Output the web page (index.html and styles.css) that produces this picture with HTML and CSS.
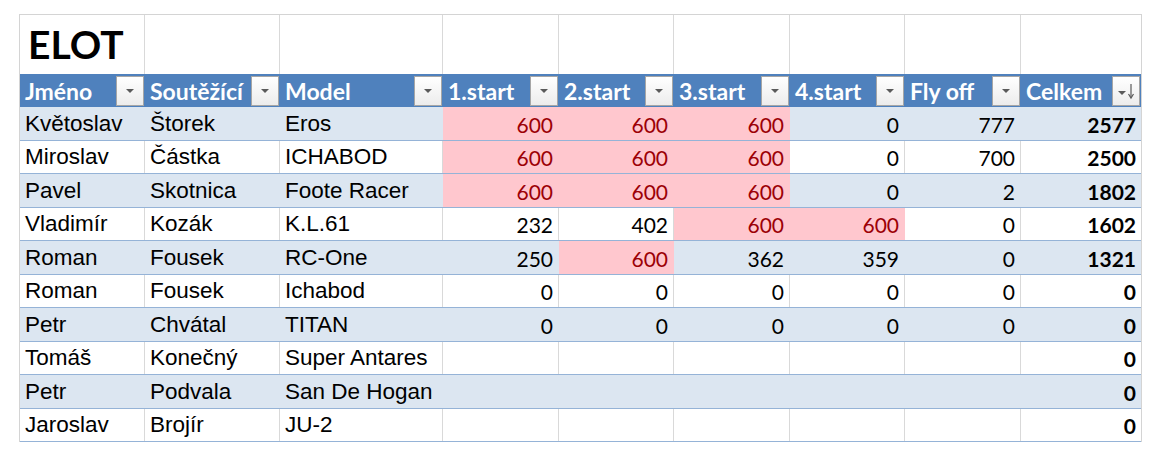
FILE: index.html
```html
<!DOCTYPE html>
<html lang="cs">
<head>
<meta charset="utf-8">
<title>ELOT</title>
<link rel="stylesheet" href="styles.css">
</head>
<body>
<div class="sheet">
  <div class="row title-row">
    <div class="cell title">ELOT</div>
    <div class="cell"></div><div class="cell"></div><div class="cell"></div><div class="cell"></div>
    <div class="cell"></div><div class="cell"></div><div class="cell"></div><div class="cell"></div>
  </div>
  <div class="row head">
    <div class="hcell"><span>Jméno</span><span class="fbtn"><svg width="10" height="6" viewBox="0 0 10 6"><path d="M1 1h8L5 5z" fill="#5a5a5a"/></svg></span></div>
    <div class="hcell"><span>Soutěžící</span><span class="fbtn"><svg width="10" height="6" viewBox="0 0 10 6"><path d="M1 1h8L5 5z" fill="#5a5a5a"/></svg></span></div>
    <div class="hcell"><span>Model</span><span class="fbtn"><svg width="10" height="6" viewBox="0 0 10 6"><path d="M1 1h8L5 5z" fill="#5a5a5a"/></svg></span></div>
    <div class="hcell"><span>1.start</span><span class="fbtn"><svg width="10" height="6" viewBox="0 0 10 6"><path d="M1 1h8L5 5z" fill="#5a5a5a"/></svg></span></div>
    <div class="hcell"><span>2.start</span><span class="fbtn"><svg width="10" height="6" viewBox="0 0 10 6"><path d="M1 1h8L5 5z" fill="#5a5a5a"/></svg></span></div>
    <div class="hcell"><span>3.start</span><span class="fbtn"><svg width="10" height="6" viewBox="0 0 10 6"><path d="M1 1h8L5 5z" fill="#5a5a5a"/></svg></span></div>
    <div class="hcell"><span>4.start</span><span class="fbtn"><svg width="10" height="6" viewBox="0 0 10 6"><path d="M1 1h8L5 5z" fill="#5a5a5a"/></svg></span></div>
    <div class="hcell"><span>Fly off</span><span class="fbtn"><svg width="10" height="6" viewBox="0 0 10 6"><path d="M1 1h8L5 5z" fill="#5a5a5a"/></svg></span></div>
    <div class="hcell"><span>Celkem</span><span class="fbtn"><svg width="22" height="20" viewBox="0 0 22 20"><path d="M3 10h8l-4 4z" fill="#5a5a5a"/><path d="M16 3v13" stroke="#5a5a5a" stroke-width="1.2"/><path d="M13.5 13l2.5 4 2.5-4" fill="none" stroke="#5a5a5a" stroke-width="1.2"/></svg></span></div>
  </div>

  <div class="row band">
    <div class="cell txt">Květoslav</div><div class="cell txt">Štorek</div><div class="cell txt">Eros</div>
    <div class="cell num red">600</div><div class="cell num red">600</div><div class="cell num red">600</div>
    <div class="cell num">0</div><div class="cell num">777</div><div class="cell num total">2577</div>
  </div>
  <div class="row">
    <div class="cell txt">Miroslav</div><div class="cell txt">Částka</div><div class="cell txt">ICHABOD</div>
    <div class="cell num red">600</div><div class="cell num red">600</div><div class="cell num red">600</div>
    <div class="cell num">0</div><div class="cell num">700</div><div class="cell num total">2500</div>
  </div>
  <div class="row band">
    <div class="cell txt">Pavel</div><div class="cell txt">Skotnica</div><div class="cell txt">Foote Racer</div>
    <div class="cell num red">600</div><div class="cell num red">600</div><div class="cell num red">600</div>
    <div class="cell num">0</div><div class="cell num">2</div><div class="cell num total">1802</div>
  </div>
  <div class="row">
    <div class="cell txt">Vladimír</div><div class="cell txt">Kozák</div><div class="cell txt">K.L.61</div>
    <div class="cell num">232</div><div class="cell num">402</div><div class="cell num red">600</div>
    <div class="cell num red">600</div><div class="cell num">0</div><div class="cell num total">1602</div>
  </div>
  <div class="row band">
    <div class="cell txt">Roman</div><div class="cell txt">Fousek</div><div class="cell txt">RC-One</div>
    <div class="cell num">250</div><div class="cell num red">600</div><div class="cell num">362</div>
    <div class="cell num">359</div><div class="cell num">0</div><div class="cell num total">1321</div>
  </div>
  <div class="row">
    <div class="cell txt">Roman</div><div class="cell txt">Fousek</div><div class="cell txt">Ichabod</div>
    <div class="cell num">0</div><div class="cell num">0</div><div class="cell num">0</div>
    <div class="cell num">0</div><div class="cell num">0</div><div class="cell num total">0</div>
  </div>
  <div class="row band">
    <div class="cell txt">Petr</div><div class="cell txt">Chvátal</div><div class="cell txt">TITAN</div>
    <div class="cell num">0</div><div class="cell num">0</div><div class="cell num">0</div>
    <div class="cell num">0</div><div class="cell num">0</div><div class="cell num total">0</div>
  </div>
  <div class="row">
    <div class="cell txt">Tomáš</div><div class="cell txt">Konečný</div><div class="cell txt">Super Antares</div>
    <div class="cell num"></div><div class="cell num"></div><div class="cell num"></div>
    <div class="cell num"></div><div class="cell num"></div><div class="cell num total">0</div>
  </div>
  <div class="row band">
    <div class="cell txt">Petr</div><div class="cell txt">Podvala</div><div class="cell txt">San De Hogan</div>
    <div class="cell num"></div><div class="cell num"></div><div class="cell num"></div>
    <div class="cell num"></div><div class="cell num"></div><div class="cell num total">0</div>
  </div>
  <div class="row">
    <div class="cell txt">Jaroslav</div><div class="cell txt">Brojír</div><div class="cell txt">JU-2</div>
    <div class="cell num"></div><div class="cell num"></div><div class="cell num"></div>
    <div class="cell num"></div><div class="cell num"></div><div class="cell num total">0</div>
  </div>
</div>
</body>
</html>
```

FILE: styles.css
```css
html, body {
  margin: 0;
  padding: 0;
  background: #ffffff;
}

.sheet {
  margin: 14px 0 0 19px;
  width: 1123px;
  border-left: 1px solid #d4d4d4;
  border-right: 1px solid #d4d4d4;
  box-sizing: border-box;
}

.row {
  display: grid;
  grid-template-columns: 125px 135px 163px 116px 115px 116px 115px 116px 120px;
  height: 33.5px;
  box-sizing: border-box;
  border-bottom: 1px solid #95b3d7;
  background: #ffffff;
}

.row.band {
  background: #dce6f1;
}

.title-row {
  height: 60px;
  border-top: 1px solid #d4d4d4;
  border-bottom: none;
}

.head {
  height: 33px;
  background: #4f81bd;
  border-bottom: none;
}

.cell {
  box-sizing: border-box;
  border-right: 1px solid #d9d9d9;
  display: flex;
  align-items: center;
  padding: 1px 5px 0 5px;
  overflow: hidden;
  white-space: nowrap;
}

.row .cell:last-child {
  border-right: none;
}

.row.band .cell {
  border-right-color: transparent;
}

.title {
  font-family: Lato, "Liberation Sans", sans-serif;
  font-weight: 700;
  font-size: 39px;
  color: #000000;
  padding-left: 8px;
  padding-top: 0;
  padding-bottom: 2px;
}

.hcell {
  display: flex;
  align-items: center;
  justify-content: space-between;
  padding: 0 1px 0 5px;
  font-family: Lato, "Liberation Sans", sans-serif;
  font-weight: 700;
  font-size: 23px;
  color: #ffffff;
  white-space: nowrap;
  overflow: hidden;
}

.fbtn {
  width: 28px;
  height: 30px;
  box-sizing: border-box;
  border: 1px solid #a6a6a6;
  background: linear-gradient(#ffffff, #ececec);
  display: flex;
  align-items: center;
  justify-content: center;
  flex: none;
}

.txt {
  font-family: "Liberation Sans", Arial, sans-serif;
  font-size: 22.5px;
  color: #000000;
}

.num {
  justify-content: flex-end;
  font-family: Lato, "Liberation Sans", sans-serif;
  font-size: 21px;
  color: #000000;
  padding-right: 5px;
  padding-top: 2px;
}

.num.red {
  background: #ffc7ce;
  color: #9c0006;
  border-right-color: transparent;
}

.total {
  font-weight: 700;
}
```
